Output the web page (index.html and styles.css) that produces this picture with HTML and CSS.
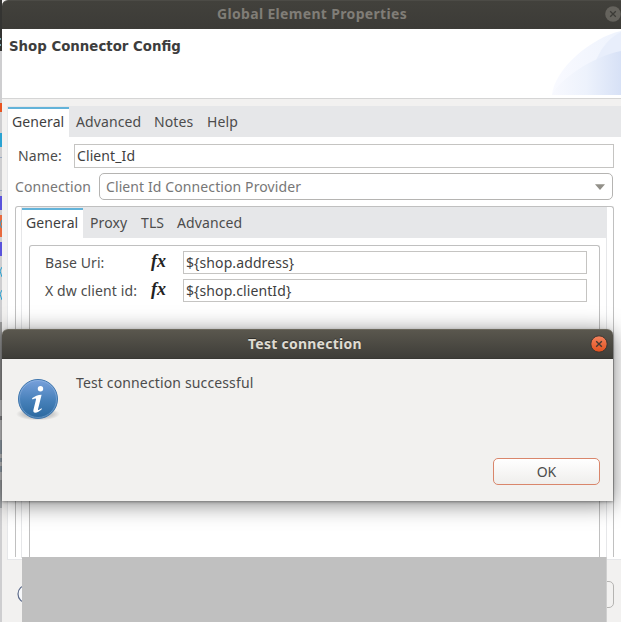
FILE: index.html
```html
<!DOCTYPE html>
<html lang="en">
<head>
<meta charset="utf-8">
<title>Global Element Properties</title>
<link rel="stylesheet" href="styles.css">
</head>
<body>
<div class="desktop">
  <aside class="backdrop"><svg width="2" height="622" viewBox="0 0 2 622">
    <path fill="#343432" d="M0 0h2v51H0z"/><path fill="#78a5ac" d="M0 38h1v2H0zm0 6h1v2H0z"/>
    <path fill="#e95420" d="M0 103h2v9H0z"/><path fill="#2aa3d2" d="M0 133h2v14H0z"/>
    <path fill="#9aa9c0" d="M0 157h2v1H0zm0 33h2v1H0z"/>
    <path fill="#5a53dc" d="M0 196h2v14H0zm0 46h2v14H0z"/><path fill="#e86a3f" d="M0 215h2v22H0z"/>
    <path stroke="#2aa3d2" d="M2 220l-2 4 2 4M2 267l-2 4 2 6M2 290l-2 4 2 6" fill="none"/>
    <path fill="#999" d="M0 322h2v78H0z"/><path fill="#8e8e90" d="M0 416h2v4H0z"/>
    <path fill="#9caab5" d="M0 440h2v14H0zm0 18h2v4H0zm0 8h2v6H0z"/>
    <path fill="#a4a7aa" d="M0 480h2v28H0z"/>
  </svg></aside>
  <main class="window">
    <header class="titlebar">
      <h1>Global Element Properties</h1>
      <svg class="close" width="16" height="16" viewBox="0 0 16 16"><circle cx="8" cy="8" r="7.8" fill="#65635d"/><path d="M5.2 5.2l5.6 5.6M10.8 5.2l-5.6 5.6" stroke="#3c3b37" stroke-width="1.3"/></svg>
    </header>
    <section class="banner">
      <h2>Shop Connector Config</h2>
      <svg class="swoosh" width="69" height="65" viewBox="0 0 69 65">
        <defs>
          <linearGradient id="a"><stop offset="0" stop-color="#f9faff"/><stop offset="1" stop-color="#eef3fd"/></linearGradient>
          <linearGradient id="b"><stop offset="0" stop-color="#f8f9fe"/><stop offset=".5" stop-color="#edf2fc"/><stop offset="1" stop-color="#d7e1f6"/></linearGradient>
        </defs>
        <path d="M0 65C2 40 38 8 69 1V65z" fill="url(#a)"/>
        <path d="M43 34C47 20 57 8 69 2V40z" fill="#e8eefb"/>
        <path d="M0 65C6 51 39 27 69 21V65z" fill="url(#b)"/>
      </svg>
    </section>
    <section class="folder">
      <nav class="tabs"><span class="tab active">General</span><span class="tab adv">Advanced</span><span class="tab notes">Notes</span><span class="tab">Help</span></nav>
      <div class="page">
        <div class="row name-row"><label>Name:</label><div class="input">Client_Id</div></div>
        <div class="row connection-row"><label>Connection</label><div class="combo"><span>Client Id Connection Provider</span><svg width="10" height="6" viewBox="0 0 10 6"><path d="M0 .3h10L5 6z" fill="#929089"/></svg></div></div>
        <div class="group">
          <div class="inner-folder">
            <nav class="tabs"><span class="tab active">General</span><span class="tab proxy">Proxy</span><span class="tab tls">TLS</span><span class="tab adv">Advanced</span></nav>
            <div class="fields">
              <div class="field"><label>Base Uri:</label><i class="fx">fx</i><div class="input">${shop.address}</div></div>
              <div class="field"><label class="client">X dw client id:</label><i class="fx">fx</i><div class="input">${shop.clientId}</div></div>
            </div>
          </div>
        </div>
      </div>
    </section>
    <footer class="footer">
      <svg width="20" height="20" viewBox="0 0 20 20"><circle cx="10" cy="10" r="9" fill="#f7f8fa" stroke="#5d6b8b" stroke-width="1.2"/></svg>
      <div class="footer-button"></div>
    </footer>
  </main>
  <div class="cover"></div>
  <div class="dialog">
    <header class="dialog-title">
      <h1>Test connection</h1>
      <svg class="close" width="18" height="18" viewBox="0 0 18 18"><defs><linearGradient id="c" x2="0" y2="1"><stop stop-color="#f4845f"/><stop offset="1" stop-color="#e2501d"/></linearGradient></defs><circle cx="9" cy="9" r="8.2" fill="url(#c)" stroke="#3a3631" stroke-width="1"/><path d="M6.2 6.2l5.6 5.6M11.8 6.2l-5.6 5.6" stroke="#443a32" stroke-width="1.4"/></svg>
    </header>
    <div class="dialog-body">
      <svg class="info" width="46" height="46" viewBox="0 0 46 46">
        <defs><linearGradient id="d" x2="0" y2="1"><stop stop-color="#79a1dc"/><stop offset=".55" stop-color="#4680b9"/><stop offset="1" stop-color="#2a689e"/></linearGradient><radialGradient id="e"><stop offset=".65" stop-color="#aaa" stop-opacity=".55"/><stop offset="1" stop-color="#aaa" stop-opacity="0"/></radialGradient></defs>
        <ellipse cx="23" cy="38" rx="22" ry="6.5" fill="url(#e)"/>
        <circle cx="23" cy="23" r="19.5" fill="url(#d)" stroke="#3f76ad"/>
        <circle cx="23" cy="23" r="18.5" fill="none" stroke="#a9c8ec" stroke-opacity=".4"/>
        <circle cx="25.5" cy="12.8" r="2.7" fill="#fff"/>
        <path d="M17 22.2C19.5 20.2 23.5 18.6 26.6 18.7L23 33.2C22.7 34.7 24 34 26.4 32.2L27 33C23 37 17.2 38.5 18.5 33.5L21 23.4C21.3 22 19.4 22.5 17.6 23.4z" fill="#fff"/>
      </svg>
      <p>Test connection successful</p>
    </div>
    <div class="actions"><button type="button">OK</button></div>
  </div>
</div>
</body>
</html>
```
FILE: styles.css
```css
* { box-sizing: border-box; }
body { margin: 0; font: 14px/20px "Noto Sans", "Open Sans", sans-serif; color: #4c4c4c; letter-spacing: .1px; white-space: nowrap; overflow: hidden; }
h1, h2, p { margin: 0; }
svg { display: block; flex: none; }
.desktop { position: relative; width: 621px; height: 622px; display: flex; overflow: hidden; }
.backdrop { width: 2px; background: #ceced0; }
.window { width: 619px; height: 622px; display: flex; flex-direction: column; background: #f2f1f0; }
.titlebar { height: 29px; flex: none; display: flex; align-items: flex-start; justify-content: flex-end; padding-top: 3px; border-top: 1px solid #4c4b46; border-radius: 6px 0 0 0; background: linear-gradient(#42413c, #3c3b37); color: #807d77; }
.titlebar h1 { width: 190px; margin-right: 198px; font-size: 14px; line-height: 20px; letter-spacing: .33px; }
.titlebar .close { margin-top: 2px; }
.banner { height: 70px; flex: none; display: flex; justify-content: space-between; background: #fff; border-bottom: 1px solid #d5d5d5; }
.banner h2 { margin: 8px 7px; font: bold 13.33px/20px "DejaVu Sans", sans-serif; letter-spacing: 0; color: #3d3d3d; }
.swoosh { margin-top: 1px; }
.folder { height: 454px; flex: none; margin: 7px 0 0 5px; border: solid #e6e7e9; border-width: 0 0 1px 1px; background: #fff; }
.tabs { display: flex; height: 31px; background: #e6e7e9; line-height: 31px; }
.tab { margin-right: 13px; }
.tab.active { width: 61px; height: 30px; margin: 1px 7px 0 0; padding-left: 4px; background: #fff; border-top: 2px solid #63b3d9; line-height: 25px; color: #3f3f3f; }
.tab.adv { width: 65px; }
.tab.notes { width: 40px; }
.tab.proxy { width: 38px; }
.tab.tls { width: 24px; margin-right: 12px; }
.page { padding: 7px 7px 0; }
.row { display: flex; align-items: center; }
.name-row { height: 24px; margin-left: 3px; }
.name-row label { width: 56px; }
.input { height: 23px; padding: 0 2px; line-height: 22px; border: 1px solid #c5c4c2; background: #fff; color: #3f3f3f; flex: 1; }
.name-row .input { height: 24px; }
.connection-row { height: 27px; margin: 5px 1px 6px 0; color: #777; }
.connection-row label { width: 84px; }
.combo { height: 27px; flex: 1; display: flex; align-items: center; justify-content: space-between; padding: 0 7px 0 6px; border: 1px solid #b5b4b2; border-radius: 5px; }
.group { height: 351px; border: 1px solid #c0c0c0; border-bottom: 0; border-radius: 3px 3px 0 0; padding: 0 6px 0 5px; }
.inner-folder { height: 351px; border: solid #e6e7e9; border-width: 0 1px; }
.fields { height: 313px; margin: 7px 6px 0 7px; padding: 5px 12px 0 15px; border: 1px solid #c0c0c0; border-bottom: 0; border-radius: 3px 3px 0 0; }
.field { display: flex; align-items: center; height: 23px; margin-bottom: 5px; }
.field label { width: 105px; padding-top: 1px; }
.field .client { letter-spacing: .12px; }
.field .input { height: 23px; }
.fx { width: 33px; font: italic bold 18px/20px "Liberation Serif", serif; color: #222; letter-spacing: 0; margin-top: -3px; padding-left: 1px; }
.footer { display: flex; justify-content: space-between; align-items: center; padding: 6px 7px 0 15px; flex: 1; }
.footer-button { width: 90px; height: 27px; border: 1px solid #b5b4b2; border-radius: 5px; }
.cover { position: absolute; left: 22px; top: 557px; width: 585px; height: 65px; background: #c0c0c0; border-right: 1px solid #cfcfcf; }
.dialog { position: absolute; left: 2px; top: 329px; width: 611px; height: 172px; border-radius: 6px 6px 0 0; background: #f2f1ef; box-shadow: 0 3px 22px rgba(0,0,0,.5), 0 1px 3px rgba(0,0,0,.35); }
.dialog-title { height: 30px; display: flex; align-items: center; justify-content: flex-end; border-top: 1px solid #6b685d; border-bottom: 1px solid #383733; border-radius: 6px 6px 0 0; background: linear-gradient(#5a574e, #3e3d38); color: #dfdbd2; }
.dialog-title h1 { width: 114px; margin-right: 228px; font-size: 14px; line-height: 20px; letter-spacing: .25px; text-shadow: 0 -1px #302f2b; }
.dialog-title .close { margin-right: 5px; }
.dialog-body { display: flex; height: 99px; padding: 14px 0 0 13px; letter-spacing: .14px; }
.dialog-body .info { margin-top: 3px; margin-right: 15px; }
.actions { display: flex; justify-content: flex-end; padding-right: 13px; }
.actions button { width: 107px; height: 27px; padding: 0; font: inherit; color: #4c4c4c; border: 1px solid #d9866b; border-radius: 5px; background: linear-gradient(#fff, #efeeec); }
```
